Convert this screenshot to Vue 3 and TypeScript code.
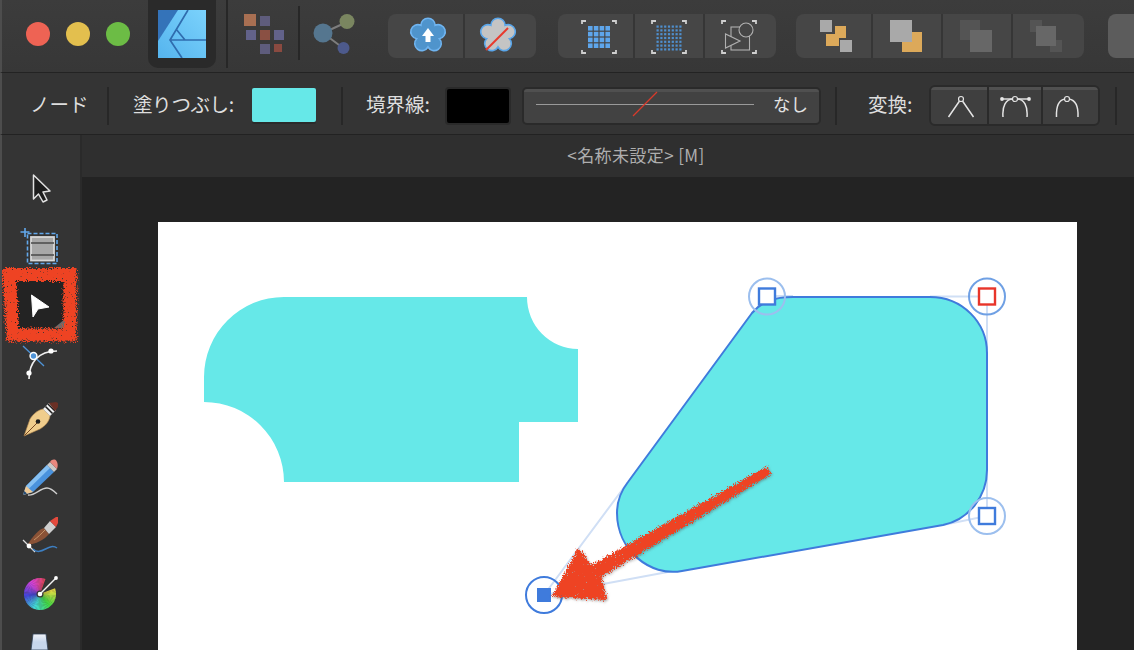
<script setup lang="ts">
function flower(cx: number, cy: number, valley: number, r: number): string {
  const pts: [number, number][] = []
  for (let i = 0; i < 5; i++) {
    const a = ((-126 + i * 72) * Math.PI) / 180
    pts.push([cx + valley * Math.cos(a), cy + valley * Math.sin(a)])
  }
  let d = `M${pts[0][0].toFixed(1)} ${pts[0][1].toFixed(1)}`
  for (let i = 1; i <= 5; i++) {
    const p = pts[i % 5]
    d += ` A${r} ${r} 0 1 1 ${p[0].toFixed(1)} ${p[1].toFixed(1)}`
  }
  return d + ' Z'
}
const flowerA = flower(428, 35, 12, 7.1)
const flowerB = flower(498, 35, 12, 7.1)

interface Wedge { d: string; fill: string }
const wedges: Wedge[] = []
const wheelStops = 60
for (let i = 0; i < wheelStops; i++) {
  // clock angles running counter-clockwise from the red at the top, ending at the yellow
  const start = 20 - (i * 310) / wheelStops
  const end = 20 - ((i + 1.15) * 310) / wheelStops
  const h = (350 - (i / wheelStops) * 300 + 360) % 360
  const toXY = (deg: number): string => {
    const a = ((deg - 90) * Math.PI) / 180
    return `${(40 + 16 * Math.cos(a)).toFixed(2)} ${(29 + 16 * Math.sin(a)).toFixed(2)}`
  }
  wedges.push({
    d: `M40 29 L${toXY(start)} A16 16 0 0 0 ${toXY(end)} Z`,
    fill: `hsl(${h}, 68%, 56%)`,
  })
}

const gridA: number[][] = []
for (let r = 0; r < 4; r++) for (let c = 0; c < 4; c++) gridA.push([588 + c * 5.8, 26 + r * 5.8])
const gridB: number[][] = []
for (let r = 0; r < 7; r++) for (let c = 0; c < 7; c++) gridB.push([656.5 + c * 3.8, 25.5 + r * 3.8])
</script>

<template>
  <div class="app">
    <header class="toolbar">
      <div class="lights">
        <span class="light red"></span>
        <span class="light yellow"></span>
        <span class="light green"></span>
      </div>
      <div class="logo-tile">
        <svg width="48" height="48" viewBox="0 0 48 48">
          <defs>
            <linearGradient id="logoBg" x1="0" y1="1" x2="1" y2="0">
              <stop offset="0" stop-color="#55b4ee" />
              <stop offset="1" stop-color="#7bd2fc" />
            </linearGradient>
          </defs>
          <rect width="48" height="48" fill="url(#logoBg)" />
          <path d="M0 0H20L0 31Z" fill="#3473b9" />
          <path d="M30 0L12 30L24 48M12 30H48M18 19L27 30" fill="none" stroke="#2f6cae" stroke-width="1.7" />
        </svg>
      </div>
      <span class="bar-sep tall"></span>
      <svg class="persona" width="50" height="72" viewBox="240 0 50 72">
        <rect x="244" y="14" width="12" height="12" fill="#a86f52" />
        <rect x="260" y="16" width="10" height="10" fill="#5e5c7c" />
        <rect x="246" y="30" width="10" height="10" fill="#62628a" />
        <rect x="260" y="30" width="10" height="10" fill="#8a5043" />
        <rect x="274" y="30" width="10" height="10" fill="#62628a" />
        <rect x="260" y="44" width="10" height="10" fill="#5e5c7c" />
        <rect x="274" y="44" width="8" height="8" fill="#8a4a40" />
      </svg>
      <span class="bar-sep short"></span>
      <svg class="share" width="56" height="72" viewBox="306 0 56 72">
        <path d="M323 33L347 22M323 33L343 48" stroke="#7d7d7d" stroke-width="2" />
        <circle cx="323" cy="33" r="9.5" fill="#55768f" />
        <circle cx="347" cy="21.5" r="7.5" fill="#7a8660" />
        <circle cx="343.5" cy="48" r="6" fill="#4d5a8c" />
      </svg>

      <div class="btn-group first">
        <div class="tb-btn">
          <svg width="75" height="44" viewBox="388 14 75 44">
            <path :d="flowerA" fill="#4f94cc" stroke="#6fb4f0" stroke-width="1.6" />
            <path d="M428 28L434 36H430.5V42H425.5V36H422Z" fill="#fff" />
          </svg>
        </div>
        <div class="tb-btn">
          <svg width="73" height="44" viewBox="463 14 73 44">
            <path :d="flowerB" fill="#c4c4c4" stroke="#5aa6ea" stroke-width="1.6" />
            <path d="M486 50L508 28" stroke="#e8392c" stroke-width="2" />
          </svg>
        </div>
      </div>

      <div class="btn-group second">
        <div class="tb-btn">
          <svg width="75" height="44" viewBox="558 14 75 44">
            <path class="bracket" d="M582 24V21H586M612 21H616V24M616 50V53H612M586 53H582V50" />
            <rect v-for="(p, i) in gridA" :key="i" :x="p[0]" :y="p[1]" width="4.6" height="4.6" fill="#5ea6ec" />
          </svg>
        </div>
        <div class="tb-btn">
          <svg width="70" height="44" viewBox="633 14 70 44">
            <path class="bracket" d="M652 24V21H656M682 21H686V24M686 50V53H682M656 53H652V50" />
            <rect v-for="(p, i) in gridB" :key="i" :x="p[0]" :y="p[1]" width="2.2" height="2.2" fill="#4f8fce" />
          </svg>
        </div>
        <div class="tb-btn">
          <svg width="73" height="44" viewBox="703 14 73 44">
            <path class="bracket" d="M722 24V21H726M752 21H756V24M756 50V53H752M726 53H722V50" />
            <rect x="731" y="27" width="18.5" height="23" fill="none" stroke="#b0b0b0" stroke-width="1.1" />
            <circle cx="746" cy="30" r="7" fill="#454545" stroke="#b0b0b0" stroke-width="1.1" />
            <path d="M725.5 34V48L740 41Z" fill="#454545" stroke="#b0b0b0" stroke-width="1.1" />
          </svg>
        </div>
      </div>

      <div class="btn-group third">
        <div class="tb-btn">
          <svg width="75" height="44" viewBox="796 14 75 44">
            <rect x="835" y="26" width="11" height="12" fill="#dca95a" />
            <rect x="826" y="34" width="13" height="12" fill="#dca95a" />
            <rect x="820" y="20" width="12" height="12" fill="#a9a9a9" />
            <rect x="840" y="40" width="12" height="12" fill="#a9a9a9" />
          </svg>
        </div>
        <div class="tb-btn">
          <svg width="70" height="44" viewBox="871 14 70 44">
            <rect x="902" y="32" width="20" height="20" fill="#dca95a" />
            <rect x="890" y="20" width="22" height="22" fill="#a9a9a9" />
          </svg>
        </div>
        <div class="tb-btn">
          <svg width="70" height="44" viewBox="941 14 70 44">
            <rect x="960" y="20" width="20" height="20" fill="#545454" />
            <rect x="970" y="30" width="22" height="22" fill="#676767" />
          </svg>
        </div>
        <div class="tb-btn">
          <svg width="73" height="44" viewBox="1011 14 73 44">
            <rect x="1030" y="20" width="12" height="12" fill="#545454" />
            <rect x="1050" y="40" width="12" height="12" fill="#545454" />
            <rect x="1036" y="26" width="20" height="20" fill="#676767" />
          </svg>
        </div>
      </div>

      <div class="last-btn"></div>
    </header>

    <section class="context">
      <span class="label node-label">ノード</span>
      <span class="ctx-sep after-node"></span>
      <span class="label fill-label">塗りつぶし:</span>
      <span class="fill-swatch"></span>
      <span class="ctx-sep after-fill"></span>
      <span class="label stroke-label">境界線:</span>
      <span class="stroke-swatch"></span>
      <div class="stroke-btn">
        <svg class="stroke-art" width="240" height="38" viewBox="524 85 240 38">
          <path d="M536 103.5H754" stroke="#9a9a9a" stroke-width="1" />
          <path d="M633 115L657 91" stroke="#d93a2b" stroke-width="1.2" />
        </svg>
        <span class="none-text">なし</span>
      </div>
      <span class="ctx-sep after-stroke"></span>
      <span class="label convert-label">変換:</span>
      <div class="convert-group">
        <div class="conv-btn">
          <svg width="56" height="38" viewBox="931 85 56 38">
            <path class="node-line" d="M948.5 115L959.5 99M973.5 115L962.5 99" />
            <circle class="node-dot" cx="961" cy="97" r="2.5" />
          </svg>
        </div>
        <div class="conv-btn">
          <svg width="54" height="38" viewBox="987 85 54 38">
            <path class="node-line" d="M1003 115C1002 104 1006 97 1013 97M1027 115C1028 104 1024 97 1017 97" />
            <path d="M1002 97H1029" stroke="#ddd" stroke-width="1.4" />
            <circle cx="1002" cy="97" r="1.9" fill="#e8e8e8" />
            <circle cx="1029" cy="97" r="1.9" fill="#e8e8e8" />
            <circle class="node-dot" cx="1015" cy="97" r="2.5" />
          </svg>
        </div>
        <div class="conv-btn">
          <svg width="57" height="38" viewBox="1041 85 57 38">
            <path class="node-line" d="M1056.5 115C1056 104 1059 98 1065 97M1078 115C1078.5 104 1075 98 1069 97" />
            <circle class="node-dot" cx="1067" cy="97" r="2.5" />
          </svg>
        </div>
      </div>
      <span class="ctx-sep after-convert"></span>
    </section>

    <main class="workspace">
      <aside class="sidebar">
        <div class="tool">
          <svg width="80" height="58" viewBox="0 159 80 58">
            <path d="M33.5 175L50 191L43 192L47 200L43 202L38.5 194L33.5 199Z" fill="#1d1d1d" stroke="#e2e2e2" stroke-width="1.5" stroke-linejoin="round" />
          </svg>
        </div>
        <div class="tool">
          <svg width="80" height="58" viewBox="0 217 80 58">
            <rect x="27.5" y="233.5" width="29.5" height="30" fill="none" stroke="#62a8ec" stroke-width="1.6" stroke-dasharray="4 2" />
            <path d="M25 228V237M20.5 232H29.5" stroke="#62a8ec" stroke-width="1.6" />
            <rect x="31" y="237" width="23" height="23.5" fill="#a8a8a8" stroke="#d8d8d8" stroke-width="1.8" />
            <path d="M31 243H54M31 255H54" stroke="#4a4a4a" stroke-width="1.4" />
          </svg>
        </div>
        <div class="tool selected">
          <div class="selected-tile">
            <svg width="50" height="48" viewBox="15 280 50 48">
              <path d="M65 319V328H54Z" fill="#6a6a6a" />
              <path d="M31.5 295L49 307L38 309L33 317Z" fill="#fff" stroke="#fff" stroke-width="1" stroke-linejoin="round" />
            </svg>
          </div>
          <svg class="scribble" width="80" height="80" viewBox="0 267 80 80">
            <defs>
              <filter id="roughBox" x="-15%" y="-15%" width="130%" height="130%" color-interpolation-filters="sRGB">
                <feTurbulence type="fractalNoise" baseFrequency="0.8" numOctaves="3" seed="4" result="n" />
                <feDisplacementMap in="SourceGraphic" in2="n" scale="9" xChannelSelector="R" yChannelSelector="G" result="d" />
                <feColorMatrix in="n" type="matrix" values="0 0 0 0 0  0 0 0 0 0  0 0 0 0 0  10 0 0 0 -7.2" result="holes" />
                <feComposite in="d" in2="holes" operator="out" />
              </filter>
            </defs>
            <path d="M9 274.5H70V335H13Z" fill="none" stroke="#ee4323" stroke-width="13" filter="url(#roughBox)" />
          </svg>
        </div>
        <div class="tool">
          <svg width="80" height="58" viewBox="0 333 80 58">
            <path d="M23 346L44 366" stroke="#4f94d8" stroke-width="1.3" />
            <path d="M29 379C29 363 38 351 57 351" fill="none" stroke="#eee" stroke-width="1.7" />
            <circle cx="51" cy="351" r="2.6" fill="#fff" />
            <circle cx="29" cy="373" r="2.6" fill="#fff" />
            <circle cx="33.5" cy="356" r="3.4" fill="#4f94d8" stroke="#fff" stroke-width="1.5" />
          </svg>
        </div>
        <div class="tool">
          <svg width="80" height="58" viewBox="0 391 80 58">
            <path d="M24 436L30 419C33 414 38 410 43 409L50 416C49 422 45 426 40 429Z" fill="#f0cd8c" stroke="#b5894f" stroke-width="0.6" />
            <path d="M24.5 435.5L38 422" stroke="#7a4a25" stroke-width="1" />
            <circle cx="38" cy="421.5" r="2.3" fill="#1e1e1e" />
            <path d="M43 409L49 403L56 410L50 416Z" fill="#eee" />
            <path d="M45.5 406.5L52.5 413.5M48 404L55 411" stroke="#1d1d1d" stroke-width="1.5" />
            <path d="M49 403L56 402L58 403V407L55 411Z" fill="#6a3025" />
          </svg>
        </div>
        <div class="tool">
          <svg width="80" height="58" viewBox="0 449 80 58">
            <path d="M28 495C35 496 40 488 47 488C51 488 54 491 57 494" fill="none" stroke="#cfcfcf" stroke-width="1.3" />
            <path d="M23 495L26 486L47 465L54 472L33 492Z" fill="#4a92dc" />
            <path d="M26 486L47 465L50 468L28.5 489Z" fill="#86c0f2" />
            <path d="M23 495L26 486L33 492Z" fill="#eec996" />
            <path d="M23 495L24.3 491L27 493.5Z" fill="#234a75" />
            <path d="M47 465L50 462L57 469L54 472Z" fill="#c9c9c9" />
            <path d="M50 462C52 459 55 459 56.5 461C58 463 58 466 57 469Z" fill="#e8877e" />
          </svg>
        </div>
        <div class="tool">
          <svg width="80" height="58" viewBox="0 508 80 58">
            <path d="M23 541L35 553" stroke="#ddd" stroke-width="1.3" />
            <path d="M33 550C41 558 49 543 57 549" fill="none" stroke="#3d7fc2" stroke-width="1.5" />
            <path d="M28 545C35 546 44 541 49 535L44 529C39 530 33 537 28 545Z" fill="#8a5236" />
            <path d="M34 541C38 538 41 535 45 531" stroke="#c79468" stroke-width="1" fill="none" />
            <path d="M44 529L50 522L56 528L49 535Z" fill="#cfcfcf" />
            <path d="M50 522L56 518L58 518L58 524L56 528Z" fill="#e2493c" />
            <circle cx="29" cy="547" r="2.4" fill="#fff" />
          </svg>
        </div>
        <div class="tool">
          <svg width="80" height="58" viewBox="0 0 80 58">
            <path v-for="(w, i) in wedges" :key="i" :d="w.d" :fill="w.fill" />
            <circle cx="40" cy="29" r="3.5" fill="#333" />
            <path d="M40 29L56 13" stroke="#f4f4f4" stroke-width="1.5" />
            <circle cx="40" cy="29" r="2.3" fill="#fff" />
            <circle cx="56" cy="13" r="1.9" fill="#fff" />
          </svg>
        </div>
        <div class="tool">
          <svg width="80" height="58" viewBox="0 623 80 58">
            <defs>
              <linearGradient id="fillTool" x1="0" y1="0" x2="0" y2="1">
                <stop offset="0" stop-color="#f2f4f8" />
                <stop offset="0.5" stop-color="#c6d6ec" />
              </linearGradient>
            </defs>
            <path d="M33 634H46L48 650H31Z" fill="url(#fillTool)" stroke="#2f3f55" stroke-width="0.8" />
          </svg>
        </div>
      </aside>

      <div class="document">
        <div class="doc-title">&lt;名称未設定&gt; [M]</div>
        <div class="canvas">
          <div class="page">
            <svg class="art" width="919" height="428" viewBox="158 222 919 428">
              <defs>
                <filter id="roughArrow" x="-10%" y="-10%" width="125%" height="125%" color-interpolation-filters="sRGB">
                  <feTurbulence type="fractalNoise" baseFrequency="0.9" numOctaves="3" seed="9" result="n" />
                  <feDisplacementMap in="SourceGraphic" in2="n" scale="8" xChannelSelector="R" yChannelSelector="G" result="d" />
                  <feColorMatrix in="n" type="matrix" values="0 0 0 0 0  0 0 0 0 0  0 0 0 0 0  10 0 0 0 -7.4" result="holes" />
                  <feComposite in="d" in2="holes" operator="out" result="speckled" />
                  <feDropShadow in="speckled" dx="0.8" dy="1.2" stdDeviation="0.8" flood-color="#555" flood-opacity="0.55" />
                </filter>
              </defs>

              <path d="M204 377A80 80 0 0 1 284 297H527A51 52 0 0 0 578 349V422H519V482H284A80 80 0 0 0 204 402Z" fill="#66e8e8" />

              <path class="handle-line" d="M767 296H793M930 296.5H987V350M987 470V516L943 525M544 595L628 482M544 595L673 571" />
              <path d="M793 297H930C962 297 987 322 987 353V470C987 497 968 520 943 525L682 571C650 577 617 550 617 513C617 502 621 491 628 482L752 313C762 301 775 297 793 297Z" fill="#66e8e8" stroke="#3f7bdc" stroke-width="2" />

              <circle cx="767" cy="296.5" r="18" class="ring soft" />
              <circle cx="987" cy="296.5" r="18" class="ring mid" />
              <circle cx="987" cy="516" r="18" class="ring soft" />
              <circle cx="544" cy="595" r="18" class="ring strong" />

              <rect x="759" y="288.5" width="16" height="16" class="knob" />
              <rect x="979" y="288.5" width="16" height="16" class="knob red-knob" />
              <rect x="979" y="508" width="16" height="16" class="knob" />
              <rect x="537" y="588" width="14" height="14" fill="#3f7bdc" />

              <path filter="url(#roughArrow)" d="M767 466L771 474L601 577L607 600L552 597L578 548L592 565Z" fill="#ee4323" />
            </svg>
          </div>
        </div>
      </div>
    </main>
  </div>
</template>

<style>
html,
body {
  margin: 0;
  background: #222;
}
</style>

<style scoped>
.app {
  width: 1134px;
  height: 650px;
  overflow: hidden;
  display: flex;
  flex-direction: column;
  font-family: "Noto Sans CJK JP", "Noto Sans", sans-serif;
  color: #dedede;
  background: #333;
}
svg {
  display: block;
  flex: none;
}

/* top toolbar */
.toolbar {
  height: 72px;
  flex: none;
  display: flex;
  align-items: center;
  padding-left: 24px;
  background: linear-gradient(#3c3c3c, #373737);
  border-bottom: 1px solid #232323;
  border-left: 2px solid #4d4d4d;
  overflow: hidden;
}
.lights {
  display: flex;
  gap: 16px;
  margin-top: -4px;
  flex: none;
}
.light {
  width: 24px;
  height: 24px;
  border-radius: 50%;
  flex: none;
}
.red { background: #ee6354; }
.yellow { background: #e3bf4e; }
.green { background: #6cbc45; }
.logo-tile {
  margin-left: 18px;
  width: 68px;
  height: 68px;
  align-self: flex-start;
  background: #2a2a2a;
  border-radius: 0 0 10px 10px;
  display: flex;
  align-items: flex-start;
  justify-content: center;
  padding-top: 10px;
  box-sizing: border-box;
  flex: none;
}
.bar-sep {
  width: 2px;
  background: #272727;
  flex: none;
}
.bar-sep.tall {
  height: 68px;
  margin-left: 10px;
  align-self: flex-start;
}
.bar-sep.short {
  height: 54px;
  margin-left: 8px;
  margin-top: -6px;
}
.persona { margin-left: 12px; }
.share { margin-left: 6px; }
.btn-group {
  display: flex;
  height: 44px;
  border-radius: 8px;
  overflow: hidden;
  background: #464646;
  flex: none;
}
.btn-group.first { margin-left: 26px; }
.btn-group.second { margin-left: 22px; }
.btn-group.third { margin-left: 20px; }
.tb-btn {
  flex: none;
  box-shadow: inset 2px 0 0 #363636;
}
.tb-btn:first-child { box-shadow: none; }
.last-btn {
  margin-left: 24px;
  width: 60px;
  height: 44px;
  flex: none;
  border-radius: 8px 0 0 8px;
  background: #5c5c5c;
}
.bracket {
  fill: none;
  stroke: #cfcfcf;
  stroke-width: 1.8;
}

/* context bar */
.context {
  height: 61px;
  flex: none;
  display: flex;
  align-items: center;
  padding-left: 28px;
  background: #343434;
  border-bottom: 1px solid #222;
  border-left: 2px solid #4d4d4d;
}
.label {
  font-size: 19.5px;
  white-space: nowrap;
  flex: none;
  line-height: 24px;
}
.node-label { width: 58px; }
.fill-label { width: 99px; margin-left: 24px; letter-spacing: -0.4px; }
.stroke-label { width: 66px; margin-left: 23px; }
.convert-label { width: 46px; margin-left: 31px; }
.ctx-sep {
  width: 2px;
  height: 38px;
  background: #272727;
  flex: none;
  margin-top: 4px;
}
.after-node { margin-left: 19px; }
.after-fill { margin-left: 25px; }
.after-stroke { margin-left: 14px; }
.after-convert { margin-left: 15px; }
.fill-swatch {
  width: 64px;
  height: 34px;
  margin-left: 20px;
  margin-top: 2px;
  flex: none;
  border-radius: 2px;
  background: #66e8e8;
  box-shadow: 0 2px 0 #2a2a2a;
}
.stroke-swatch {
  width: 62px;
  height: 34px;
  margin-left: 13px;
  margin-top: 4px;
  flex: none;
  background: #000;
  border: 2px solid #2a2a2a;
  border-radius: 4px;
}
.stroke-btn {
  width: 299px;
  height: 38px;
  margin-left: 11px;
  margin-top: 4px;
  flex: none;
  box-sizing: border-box;
  display: flex;
  align-items: center;
  justify-content: space-between;
  padding: 0 11px 3px 0;
  background: linear-gradient(#505050 0, #505050 3px, #424242 3px);
  border: 2px solid #2a2a2a;
  border-radius: 5px;
  overflow: hidden;
}
.stroke-art { margin-top: 2px; }
.none-text {
  font-size: 17.5px;
  line-height: 20px;
  color: #e2e2e2;
}
.convert-group {
  display: flex;
  width: 171px;
  height: 41px;
  margin-left: 15px;
  margin-top: 4px;
  flex: none;
  box-sizing: border-box;
  border: 2px solid #2a2a2a;
  border-radius: 6px;
  overflow: hidden;
  background: linear-gradient(#505050 0, #505050 3px, #3f3f3f 3px);
}
.conv-btn {
  flex: none;
  box-shadow: inset 2px 0 0 #2a2a2a;
}
.conv-btn:first-child { box-shadow: none; }
.node-line {
  fill: none;
  stroke: #e4e4e4;
  stroke-width: 1.5;
}
.node-dot {
  fill: #3f3f3f;
  stroke: #e4e4e4;
  stroke-width: 1.2;
}

/* body */
.workspace {
  flex: 1;
  display: flex;
  min-height: 0;
}
.sidebar {
  width: 78px;
  flex: none;
  padding-top: 24px;
  background: #343434;
  border-left: 2px solid #4d4d4d;
  border-right: 2px solid #2a2a2a;
  overflow: hidden;
}
.tool {
  height: 58px;
  margin-left: -2px;
  position: relative;
}
.selected-tile {
  width: 50px;
  height: 48px;
  margin-left: 15px;
  position: relative;
  top: 5px;
  background: #232323;
}
.scribble {
  position: absolute;
  left: 0;
  top: -8px;
}
.document {
  flex: 1;
  min-width: 0;
  display: flex;
  flex-direction: column;
}
.doc-title {
  height: 42px;
  flex: none;
  box-sizing: border-box;
  display: flex;
  align-items: center;
  justify-content: center;
  padding: 0 0 3px 56px;
  background: #2f2f2f;
  color: #aeaeae;
  font-size: 17px;
  letter-spacing: 0.4px;
}
.canvas {
  flex: 1;
  background: #232323;
  padding: 45px 0 0 76px;
  min-height: 0;
}
.page {
  width: 919px;
  height: 428px;
  background: #fff;
}
.handle-line {
  fill: none;
  stroke: #d0dff5;
  stroke-width: 2;
}
.ring {
  fill: none;
  stroke-width: 2;
}
.ring.soft { stroke: #9cbfee; }
.ring.mid { stroke: #6fa0e4; }
.ring.strong { stroke: #3f7bdc; }
.knob {
  fill: #fff;
  stroke: #3f7bdc;
  stroke-width: 2.4;
}
.red-knob { stroke: #e8352a; }
</style>
